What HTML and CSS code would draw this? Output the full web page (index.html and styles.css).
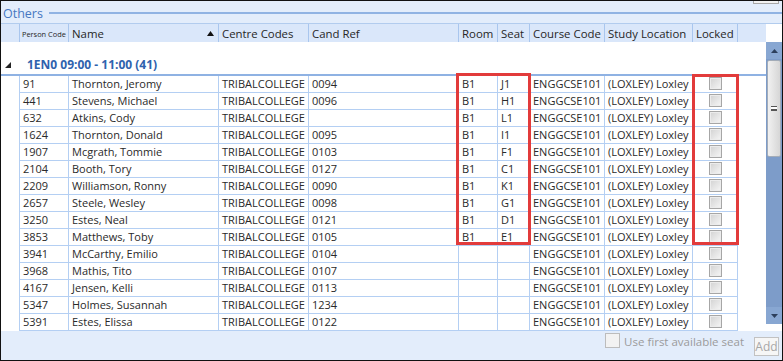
FILE: index.html
```html
<!DOCTYPE html>
<html>

<head>
    <meta charset="utf-8" />
    <title>Others</title>
    <link rel="stylesheet" href="styles.css">
</head>

<body>
    <div class="window">
        <div class="stub"></div>
        <div class="title">
            <span class="title-text">Others</span>
            <span class="title-rule"></span>
        </div>

        <div class="grid">
            <!-- column headers -->
            <div class="grid-head">
                <div class="cols head-cells">
                    <div class="hcell"></div>
                    <div class="hcell hcell-small">Person Code</div>
                    <div class="hcell hcell-sort">Name
                        <svg class="sort" width="7" height="5" viewBox="0 0 7 5"><polygon points="3.5,0 7,5 0,5" fill="#111" /></svg>
                    </div>
                    <div class="hcell">Centre Codes</div>
                    <div class="hcell">Cand Ref</div>
                    <div class="hcell">Room</div>
                    <div class="hcell">Seat</div>
                    <div class="hcell">Course Code</div>
                    <div class="hcell">Study Location</div>
                    <div class="hcell">Locked</div>
                </div>
                <div class="head-fill"></div>
                <div class="head-corner"></div>
            </div>

            <div class="grid-body">
                <div class="rows-area">
                    <div class="group">
                        <svg class="expander" width="6" height="6" viewBox="0 0 6 6"><polygon points="6,0 6,6 0,6" fill="#222" /></svg>
                        <span class="group-text">1EN0 09:00 - 11:00 (41)</span>
                    </div>

                    <div class="cols row"><div></div><div>91</div><div>Thornton, Jeromy</div><div>TRIBALCOLLEGE</div><div>0094</div><div>B1</div><div>J1</div><div>ENGGCSE101</div><div>(LOXLEY) Loxley</div><div class="lock"><span class="chk"></span></div></div>
                    <div class="cols row"><div></div><div>441</div><div>Stevens, Michael</div><div>TRIBALCOLLEGE</div><div>0096</div><div>B1</div><div>H1</div><div>ENGGCSE101</div><div>(LOXLEY) Loxley</div><div class="lock"><span class="chk"></span></div></div>
                    <div class="cols row"><div></div><div>632</div><div>Atkins, Cody</div><div>TRIBALCOLLEGE</div><div></div><div>B1</div><div>L1</div><div>ENGGCSE101</div><div>(LOXLEY) Loxley</div><div class="lock"><span class="chk"></span></div></div>
                    <div class="cols row"><div></div><div>1624</div><div>Thornton, Donald</div><div>TRIBALCOLLEGE</div><div>0095</div><div>B1</div><div>I1</div><div>ENGGCSE101</div><div>(LOXLEY) Loxley</div><div class="lock"><span class="chk"></span></div></div>
                    <div class="cols row"><div></div><div>1907</div><div>Mcgrath, Tommie</div><div>TRIBALCOLLEGE</div><div>0103</div><div>B1</div><div>F1</div><div>ENGGCSE101</div><div>(LOXLEY) Loxley</div><div class="lock"><span class="chk"></span></div></div>
                    <div class="cols row"><div></div><div>2104</div><div>Booth, Tory</div><div>TRIBALCOLLEGE</div><div>0127</div><div>B1</div><div>C1</div><div>ENGGCSE101</div><div>(LOXLEY) Loxley</div><div class="lock"><span class="chk"></span></div></div>
                    <div class="cols row"><div></div><div>2209</div><div>Williamson, Ronny</div><div>TRIBALCOLLEGE</div><div>0090</div><div>B1</div><div>K1</div><div>ENGGCSE101</div><div>(LOXLEY) Loxley</div><div class="lock"><span class="chk"></span></div></div>
                    <div class="cols row"><div></div><div>2657</div><div>Steele, Wesley</div><div>TRIBALCOLLEGE</div><div>0098</div><div>B1</div><div>G1</div><div>ENGGCSE101</div><div>(LOXLEY) Loxley</div><div class="lock"><span class="chk"></span></div></div>
                    <div class="cols row"><div></div><div>3250</div><div>Estes, Neal</div><div>TRIBALCOLLEGE</div><div>0121</div><div>B1</div><div>D1</div><div>ENGGCSE101</div><div>(LOXLEY) Loxley</div><div class="lock"><span class="chk"></span></div></div>
                    <div class="cols row"><div></div><div>3853</div><div>Matthews, Toby</div><div>TRIBALCOLLEGE</div><div>0105</div><div>B1</div><div>E1</div><div>ENGGCSE101</div><div>(LOXLEY) Loxley</div><div class="lock"><span class="chk"></span></div></div>
                    <div class="cols row"><div></div><div>3941</div><div>McCarthy, Emilio</div><div>TRIBALCOLLEGE</div><div>0104</div><div></div><div></div><div>ENGGCSE101</div><div>(LOXLEY) Loxley</div><div class="lock"><span class="chk"></span></div></div>
                    <div class="cols row"><div></div><div>3968</div><div>Mathis, Tito</div><div>TRIBALCOLLEGE</div><div>0107</div><div></div><div></div><div>ENGGCSE101</div><div>(LOXLEY) Loxley</div><div class="lock"><span class="chk"></span></div></div>
                    <div class="cols row"><div></div><div>4167</div><div>Jensen, Kelli</div><div>TRIBALCOLLEGE</div><div>0113</div><div></div><div></div><div>ENGGCSE101</div><div>(LOXLEY) Loxley</div><div class="lock"><span class="chk"></span></div></div>
                    <div class="cols row"><div></div><div>5347</div><div>Holmes, Susannah</div><div>TRIBALCOLLEGE</div><div>1234</div><div></div><div></div><div>ENGGCSE101</div><div>(LOXLEY) Loxley</div><div class="lock"><span class="chk"></span></div></div>
                    <div class="cols row"><div></div><div>5391</div><div>Estes, Elissa</div><div>TRIBALCOLLEGE</div><div>0122</div><div></div><div></div><div>ENGGCSE101</div><div>(LOXLEY) Loxley</div><div class="lock"><span class="chk"></span></div></div>
                </div>

                <!-- vertical scrollbar -->
                <div class="vscroll">
                    <div class="track">
                        <div class="arrow">
                            <svg width="7" height="4" viewBox="0 0 7 4"><polygon points="3.5,0 7,4 0,4" fill="#2c3f5c" /></svg>
                        </div>
                        <div class="thumb"><span class="grip"></span></div>
                        <div class="track-rest"></div>
                        <div class="arrow">
                            <svg width="7" height="4" viewBox="0 0 7 4"><polygon points="0,0 7,0 3.5,4" fill="#2c3f5c" /></svg>
                        </div>
                    </div>
                </div>
            </div>

            <div class="mark mark-seat"></div>
            <div class="mark mark-lock"></div>
        </div>

        <div class="footer">
            <span class="foot-chk"></span>
            <span class="foot-label">Use first available seat</span>
            <span class="btn">Add</span>
        </div>
    </div>
</body>

</html>
```

FILE: styles.css
```css
* {
    box-sizing: border-box;
}

body {
    margin: 0;
    font-family: "Open Sans", "Noto Sans", sans-serif;
    color: #333;
}

.window {
    position: relative;
    width: 783px;
    height: 361px;
    border: 1px solid #111;
    background: #e3edfb;
    overflow: hidden;
}

.stub {
    position: absolute;
    top: -1px;
    left: 752px;
    width: 26px;
    height: 4px;
    background: #f2f2f2;
    border: 1px solid #a8a8a8;
    border-top: none;
}

/* section title */
.title {
    display: flex;
    align-items: center;
    height: 22px;
    padding: 2px 0 0 2px;
}

.title-text {
    font-size: 12.5px;
    color: #4677c1;
}

.title-rule {
    flex: 1;
    height: 2px;
    margin-left: 6px;
    background: #90b3e3;
}

/* grid */
.grid {
    position: relative;
}

.cols {
    display: grid;
    grid-template-columns: 19px 49px 150px 90px 150px 39px 32px 75px 88px 45px;
}

.grid-head {
    display: flex;
    height: 19px;
    border-top: 1px solid #b2ccee;
}

.head-cells {
    background: #dae7fa;
}

.hcell {
    display: flex;
    align-items: center;
    padding: 0 3px 0 3px;
    border-right: 1px solid #a9c6ee;
    font-size: 11.4px;
    color: #262626;
    white-space: nowrap;
    overflow: hidden;
}

.hcell-small {
    padding-left: 2px;
    font-size: 7.4px;
    padding-top: 1px;
}

.hcell-sort {
    justify-content: space-between;
}

.sort {
    margin-right: 1px;
}

.head-fill {
    width: 28px;
    background: #dae7fa;
}

.head-corner {
    width: 16px;
    background: #fff;
}

.grid-body {
    display: flex;
    height: 289px;
}

.rows-area {
    width: 765px;
    background: #fff;
}

.group {
    display: flex;
    align-items: center;
    height: 34px;
    padding: 14px 0 0 4px;
    border-bottom: 2px solid #8fb2e3;
}

.expander {
    margin-right: 16px;
}

.group-text {
    font-size: 12px;
    font-weight: 700;
    line-height: 16px;
    color: #2f62ad;
}

.row {
    height: 17px;
}

.row > div {
    padding: 0 3px;
    border-right: 1px solid #b4cff3;
    border-bottom: 1px solid #b4cff3;
    font-size: 11px;
    line-height: 16px;
    color: #2a2a2a;
    white-space: nowrap;
    overflow: hidden;
}

.row > div:first-child {
    border-bottom: none;
}

.row > .lock {
    display: flex;
    justify-content: center;
    padding-top: 1px;
}

.chk {
    width: 13px;
    height: 13px;
    border: 1px solid #a6a6a6;
    background: linear-gradient(135deg, #d2d2d2, #f6f6f6);
    box-shadow: inset 0 0 0 1px #ececec;
}

/* scrollbar */
.vscroll {
    width: 16px;
    background: #fff;
}

.track {
    display: flex;
    flex-direction: column;
    height: 282px;
    background: #7d9cc9;
}

.arrow {
    display: flex;
    align-items: center;
    justify-content: center;
    height: 17px;
    background: #88a7d2;
}

.thumb {
    display: flex;
    align-items: center;
    justify-content: center;
    height: 97px;
    margin: 1px 1px 0 1px;
    border: 1px solid #a3acb8;
    border-radius: 2px;
    background: linear-gradient(90deg, #f1f1f1, #d6d6d6);
}

.grip {
    width: 6px;
    height: 5px;
    border-top: 1px solid #555;
    border-bottom: 1px solid #555;
    background: linear-gradient(#fff 2px, #555 2px, #555 3px, #fff 3px);
}

.track-rest {
    flex: 1;
}

/* highlight marks */
.mark {
    position: absolute;
    border: 3px solid #e23b3b;
}

.mark-seat {
    left: 455px;
    top: 50px;
    width: 75px;
    height: 172px;
}

.mark-lock {
    left: 691px;
    top: 51px;
    width: 47px;
    height: 171px;
}

/* footer */
.footer {
    display: flex;
    justify-content: flex-end;
    align-items: flex-start;
    height: 29px;
    padding-right: 3px;
}

.foot-chk {
    width: 15px;
    height: 15px;
    margin-top: 2px;
    border: 1px solid #bcbcbc;
    background: #f2f2f2;
}

.foot-label {
    margin: 3px 10px 0 4px;
    font-size: 11.5px;
    line-height: 16px;
    color: #9b9b9b;
}

.btn {
    width: 25px;
    height: 19px;
    margin-top: 6px;
    border: 1px solid #c2c2c2;
    background: #f6f6f6;
    font-size: 12px;
    line-height: 17px;
    text-align: center;
    color: #a6a6a6;
}
```
